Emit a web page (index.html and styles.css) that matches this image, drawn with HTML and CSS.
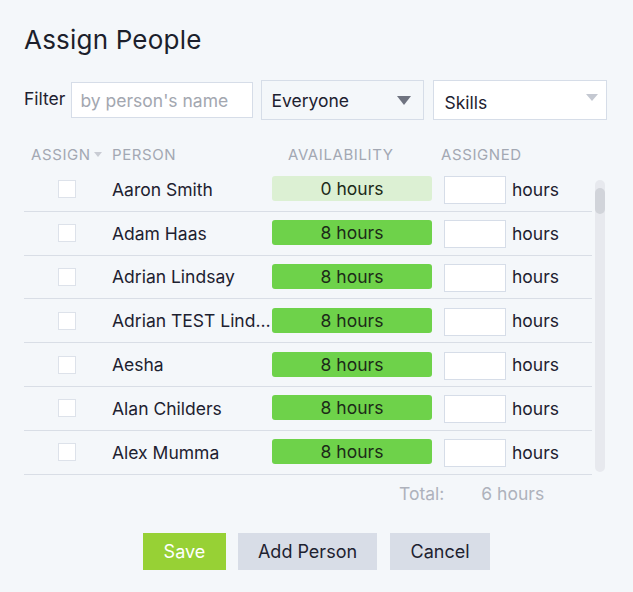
FILE: index.html
```html
<!DOCTYPE html>
<html lang="en">
<head>
    <meta charset="UTF-8">
    <meta name="viewport" content="width=device-width, initial-scale=1.0">
    <title>Assign People</title>
    <link rel="stylesheet" href="styles.css">
</head>
<body>
    <div class="dialog">
        <h1>Assign People</h1>

        <div class="filters">
            <label class="filter-label" for="name-filter">Filter</label>
            <input id="name-filter" class="name-filter" type="text" placeholder="by person's name">
            <div class="select select-group">
                <span>Everyone</span>
                <span class="caret caret-dark"></span>
            </div>
            <div class="select select-skills">
                <span>Skills</span>
                <span class="caret caret-light"></span>
            </div>
        </div>

        <div class="table-head">
            <div class="th th-assign">Assign<span class="sort-caret"></span></div>
            <div class="th th-person">Person</div>
            <div class="th th-avail">Availability</div>
            <div class="th th-assigned">Assigned</div>
        </div>

        <div class="list-wrap">
            <div class="list">
                <div class="row">
                    <div class="cell-check"><span class="checkbox"></span></div>
                    <div class="cell-name">Aaron Smith</div>
                    <div class="bar bar-empty">0 hours</div>
                    <div class="hours-input"></div>
                    <div class="unit">hours</div>
                </div>
                <div class="row">
                    <div class="cell-check"><span class="checkbox"></span></div>
                    <div class="cell-name">Adam Haas</div>
                    <div class="bar">8 hours</div>
                    <div class="hours-input"></div>
                    <div class="unit">hours</div>
                </div>
                <div class="row">
                    <div class="cell-check"><span class="checkbox"></span></div>
                    <div class="cell-name">Adrian Lindsay</div>
                    <div class="bar">8 hours</div>
                    <div class="hours-input"></div>
                    <div class="unit">hours</div>
                </div>
                <div class="row">
                    <div class="cell-check"><span class="checkbox"></span></div>
                    <div class="cell-name">Adrian TEST Lindsay</div>
                    <div class="bar">8 hours</div>
                    <div class="hours-input"></div>
                    <div class="unit">hours</div>
                </div>
                <div class="row">
                    <div class="cell-check"><span class="checkbox"></span></div>
                    <div class="cell-name">Aesha</div>
                    <div class="bar">8 hours</div>
                    <div class="hours-input"></div>
                    <div class="unit">hours</div>
                </div>
                <div class="row">
                    <div class="cell-check"><span class="checkbox"></span></div>
                    <div class="cell-name">Alan Childers</div>
                    <div class="bar">8 hours</div>
                    <div class="hours-input"></div>
                    <div class="unit">hours</div>
                </div>
                <div class="row">
                    <div class="cell-check"><span class="checkbox"></span></div>
                    <div class="cell-name">Alex Mumma</div>
                    <div class="bar">8 hours</div>
                    <div class="hours-input"></div>
                    <div class="unit">hours</div>
                </div>
            </div>
            <!-- custom scrollbar drawn over the list's right edge -->
            <div class="scroll-track"><div class="scroll-thumb"></div></div>
        </div>

        <div class="total">
            <span class="total-label">Total:</span>
            <span class="total-value">6 hours</span>
        </div>

        <div class="actions">
            <button class="btn btn-save">Save</button>
            <button class="btn">Add Person</button>
            <button class="btn btn-cancel">Cancel</button>
        </div>
    </div>
</body>
</html>
```

FILE: styles.css
```css
/* Reset and base font */
* {
    margin: 0;
    padding: 0;
    box-sizing: border-box;
}
body {
    font-family: Inter, "Noto Sans", sans-serif;
    background-color: #f4f7fa;
    color: #1d2130;
    font-size: 17.5px;
}

.dialog {
    padding: 24px 24px 0 24px;
}

/* Title */
h1 {
    font-size: 26px;
    font-weight: 400;
    line-height: 32px;
    color: #1c1f2c;
    letter-spacing: 0.2px;
}

/* Filter row */
.filters {
    display: flex;
    align-items: center;
    margin-top: 24px;
    height: 40px;
}
.filter-label {
    margin-right: 6px;
    margin-top: -4px;
}
.name-filter {
    width: 182px;
    height: 36px;
    border: 1px solid #d6dde8;
    background: #fff;
    padding: 0 8px;
    font-family: inherit;
    font-size: 17.5px;
    color: #1d2130;
    outline: none;
}
.name-filter::placeholder {
    color: #a3a7b0;
}
.select {
    height: 40px;
    border: 1px solid #d6dde8;
    display: flex;
    align-items: center;
    justify-content: space-between;
    padding: 0 12px 0 9px;
}
.select-group {
    width: 163px;
    margin-left: 8px;
    background: #f4f7fa;
}
.select-skills {
    width: 174px;
    margin-left: 9px;
    background: #fff;
    padding-left: 10px;
    padding-right: 8px;
}
.select-skills span:first-child {
    margin-top: 4px;
}
.caret {
    width: 0;
    height: 0;
    border-left: 7px solid transparent;
    border-right: 7px solid transparent;
    border-top: 9px solid #6f7380;
}
.caret-light {
    border-left-width: 6px;
    border-right-width: 6px;
    border-top: 7px solid #c4c8d1;
    margin-top: -6px;
}

/* Table header */
.table-head {
    display: grid;
    grid-template-columns: 88px 160px 160px 1fr;
    margin-top: 20px;
    height: 28px;
    align-items: center;
}
.th {
    font-size: 15px;
    color: #a3a8b3;
    text-transform: uppercase;
    letter-spacing: 0.6px;
}
.th-assign {
    padding-left: 7px;
    display: flex;
    align-items: center;
}
.sort-caret {
    width: 0;
    height: 0;
    border-left: 4px solid transparent;
    border-right: 4px solid transparent;
    border-top: 5px solid #c9ccd4;
    margin-left: 3px;
}
.th-avail {
    padding-left: 16px;
}
.th-assigned {
    padding-left: 9px;
}

/* Person list */
.list-wrap {
    position: relative;
    width: 581px;
}
.list {
    width: 568px;
    height: 307px;
    overflow: hidden;
}
.row {
    display: grid;
    grid-template-columns: 88px 160px 160px 74px 1fr;
    align-items: center;
    height: 43.8px;
    border-bottom: 1px solid #d9dee6;
}
.cell-check {
    padding-left: 34px;
    display: flex;
}
.checkbox {
    width: 18px;
    height: 18px;
    background: #fff;
    border: 1px solid #dde2ea;
}
.cell-name {
    white-space: nowrap;
    overflow: hidden;
    text-overflow: ellipsis;
}
.bar {
    height: 25px;
    line-height: 25px;
    background: #6ed24a;
    border-radius: 3px;
    text-align: center;
    color: #1c2a18;
    margin-top: -1px;
}
.bar-empty {
    background: #dcf0d3;
}
.hours-input {
    margin-left: 12px;
    width: 62px;
    height: 28px;
    background: #fff;
    border: 1px solid #d6dde8;
    margin-top: 2px;
}
.unit {
    padding-left: 6px;
}

/* Scrollbar */
.scroll-track {
    position: absolute;
    right: 0;
    top: 12px;
    width: 10px;
    height: 292px;
    background: #e7e9ee;
    border-radius: 5px;
}
.scroll-thumb {
    margin-top: 8px;
    height: 26px;
    background: #d1d4da;
    border-radius: 5px;
}

/* Total line */
.total {
    display: flex;
    height: 36px;
    align-items: center;
    color: #aeb2bc;
    padding-left: 375px;
}
.total-value {
    margin-left: 37px;
}

/* Buttons */
.actions {
    display: flex;
    justify-content: center;
    margin-top: 22px;
}
.btn {
    height: 37px;
    border: none;
    background: #d8dde7;
    color: #1e2230;
    font-family: inherit;
    font-size: 18px;
    padding: 0 20px;
    margin-right: 12px;
}
.btn-save {
    background: #97d135;
    color: #fff;
    width: 83px;
}
.btn-cancel {
    width: 100px;
    margin-left: 1px;
    margin-right: 0;
}
```
